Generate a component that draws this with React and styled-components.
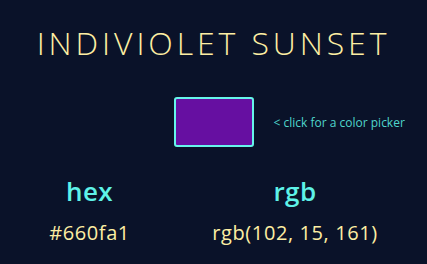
import React from "react";
import styled, { createGlobalStyle } from "styled-components";

const Global = createGlobalStyle`
  html, body { background: #0a1229; }
  body { margin: 8px; font-family: "Open Sans", Lato, sans-serif; }
`;

const Page = styled.div`
  display: flex;
  flex-direction: column;
  align-items: stretch;
`;

const Title = styled.h1`
  margin: 15px 0 0;
  text-align: center;
  font-size: 32px;
  line-height: 40px;
  font-weight: 300;
  letter-spacing: 3.9px;
  color: #fdeea3;
`;

const PickerRow = styled.div`
  margin-top: 34px;
  display: grid;
  grid-template-columns: 1fr auto 1fr;
  align-items: center;
`;

const Swatch = styled.button`
  grid-column: 2;
  width: 80px;
  height: 50px;
  padding: 0;
  border: 2px solid #66f5ea;
  border-radius: 3px;
  background: ${(p) => p.$color};
  cursor: pointer;
`;

const Hint = styled.span`
  grid-column: 3;
  margin-left: 20px;
  font-size: 12px;
  color: #4fd6cc;
`;

const Values = styled.div`
  margin-top: 28px;
  display: flex;
  justify-content: space-around;
`;

const Column = styled.div`
  display: flex;
  flex-direction: column;
  align-items: center;
`;

const Label = styled.div`
  font-size: 26px;
  line-height: 32px;
  font-weight: 600;
  letter-spacing: 0.5px;
  color: #5ef2e8;
`;

const Value = styled.div`
  margin-top: 14px;
  font-size: 20px;
  line-height: 24px;
  letter-spacing: 0.6px;
  color: #fdeea3;
`;

export default function App() {
  const hex = "#660fa1";
  return (
    <>
      <Global />
      <Page>
        <Title>INDIVIOLET SUNSET</Title>
        <PickerRow>
          <Swatch $color={hex} aria-label="color picker" />
          <Hint>&lt; click for a color picker</Hint>
        </PickerRow>
        <Values>
          <Column>
            <Label>hex</Label>
            <Value>{hex}</Value>
          </Column>
          <Column>
            <Label>rgb</Label>
            <Value>rgb(102, 15, 161)</Value>
          </Column>
        </Values>
      </Page>
    </>
  );
}
